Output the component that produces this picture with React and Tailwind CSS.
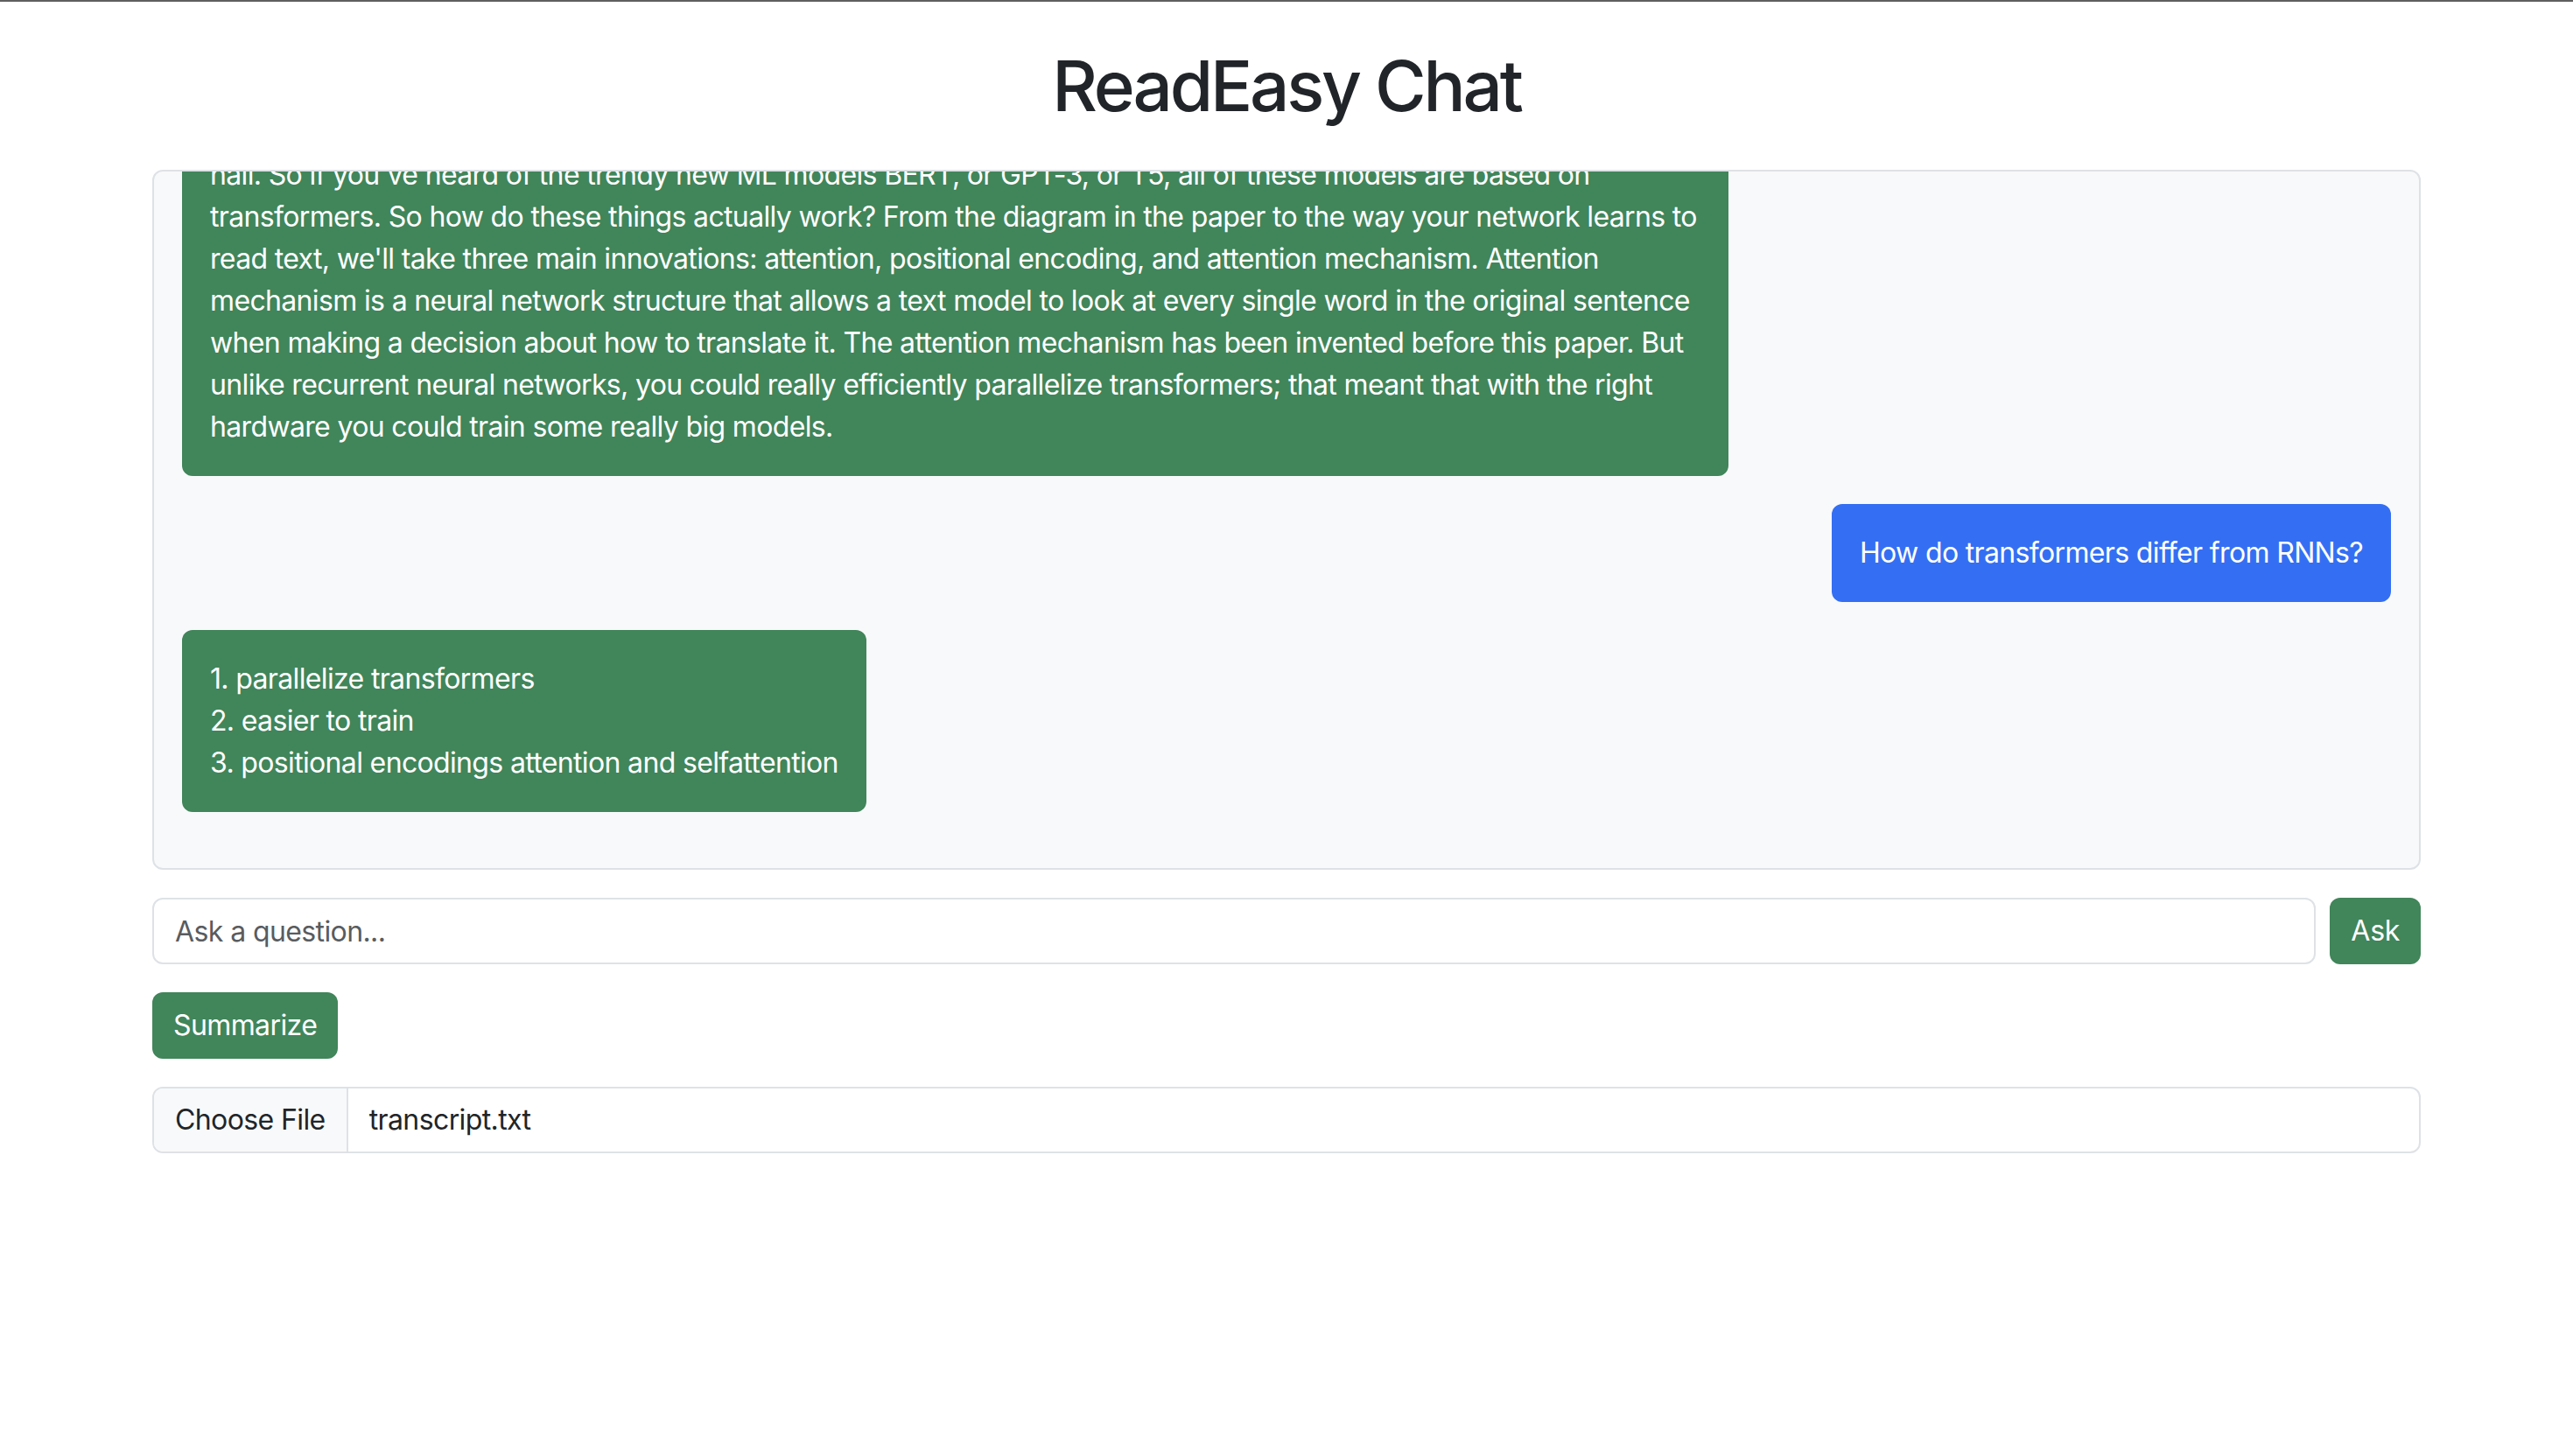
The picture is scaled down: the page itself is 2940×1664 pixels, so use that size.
import React from "react";

const font = { fontFamily: "Inter, 'Noto Sans', 'Liberation Sans', sans-serif" };

// line breaks follow the wrapped lines of the original bubble
const longAnswer = [
  "Transformers are a type of neural network architecture that have been gaining popularity.",
  "They were recently used by OpenAI in their language models, and also by DeepMind for",
  "AlphaStar. Transformers were introduced in 2017 in a paper called Attention Is All You Need,",
  "and it's a bit like having a hammer, where everything starts to look like a",
  "nail. So if you've heard of the trendy new ML models BERT, or GPT-3, or T5, all of these models are based on",
  "transformers. So how do these things actually work? From the diagram in the paper to the way your network learns to",
  "read text, we'll take three main innovations: attention, positional encoding, and attention mechanism. Attention",
  "mechanism is a neural network structure that allows a text model to look at every single word in the original sentence",
  "when making a decision about how to translate it. The attention mechanism has been invented before this paper. But",
  "unlike recurrent neural networks, you could really efficiently parallelize transformers; that meant that with the right",
  "hardware you could train some really big models.",
].join("\n");

const messages = [
  { role: "bot", text: longAnswer, wide: true },
  { role: "user", text: "How do transformers differ from RNNs?" },
  {
    role: "bot",
    text: "1. parallelize transformers\n2. easier to train\n3. positional encodings attention and selfattention",
  },
];

export default function App() {
  return (
    <div className="min-h-screen bg-white border-t-2 border-[#5f5f5f] text-[#212529]" style={font}>
      <div className="w-[2592px] mx-auto">
        <h1 className="text-center text-[80px] leading-[1.2] font-medium tracking-[-0.04em] my-[48px]">
          ReadEasy Chat
        </h1>

        {/* chat window, pinned to the newest message */}
        <div className="h-[800px] border-2 border-[#dee2e6] rounded-[12px] bg-[#f8f9fa] p-[32px] flex flex-col justify-end overflow-hidden">
          {messages.map((m, i) => (
            <div
              key={i}
              className={
                "shrink-0 max-w-[70%] mb-[32px] p-[32px] rounded-[12px] text-white text-[32px] leading-[48px] tracking-[-0.65px] whitespace-pre " +
                (m.role === "user" ? "self-end bg-[#346ff3]" : "self-start bg-[#41855a]") +
                (m.wide ? " w-[70%]" : "")
              }
            >
              {m.text}
            </div>
          ))}
        </div>

        <div className="mt-[32px] flex gap-[16px]">
          <input
            type="text"
            placeholder="Ask a question..."
            className="flex-1 h-[76px] border-2 border-[#dee2e6] rounded-[12px] px-[24px] text-[32px] tracking-[-0.6px] bg-white placeholder:text-[#595c5f] outline-none"
          />
          <button className="h-[76px] px-[24px] rounded-[12px] bg-[#41855a] text-white text-[32px] tracking-[-0.3px]">
            Ask
          </button>
        </div>

        <button className="mt-[32px] h-[76px] px-[24px] rounded-[12px] bg-[#41855a] text-white text-[32px] tracking-[-0.6px]">
          Summarize
        </button>

        <div className="mt-[32px] flex h-[76px] border-2 border-[#dee2e6] rounded-[12px] overflow-hidden text-[32px] tracking-[-0.6px]">
          <div className="bg-[#f8f9fa] border-r-2 border-[#dee2e6] px-[24px] flex items-center">Choose File</div>
          <div className="px-[24px] flex items-center bg-white">transcript.txt</div>
        </div>
      </div>
    </div>
  );
}
